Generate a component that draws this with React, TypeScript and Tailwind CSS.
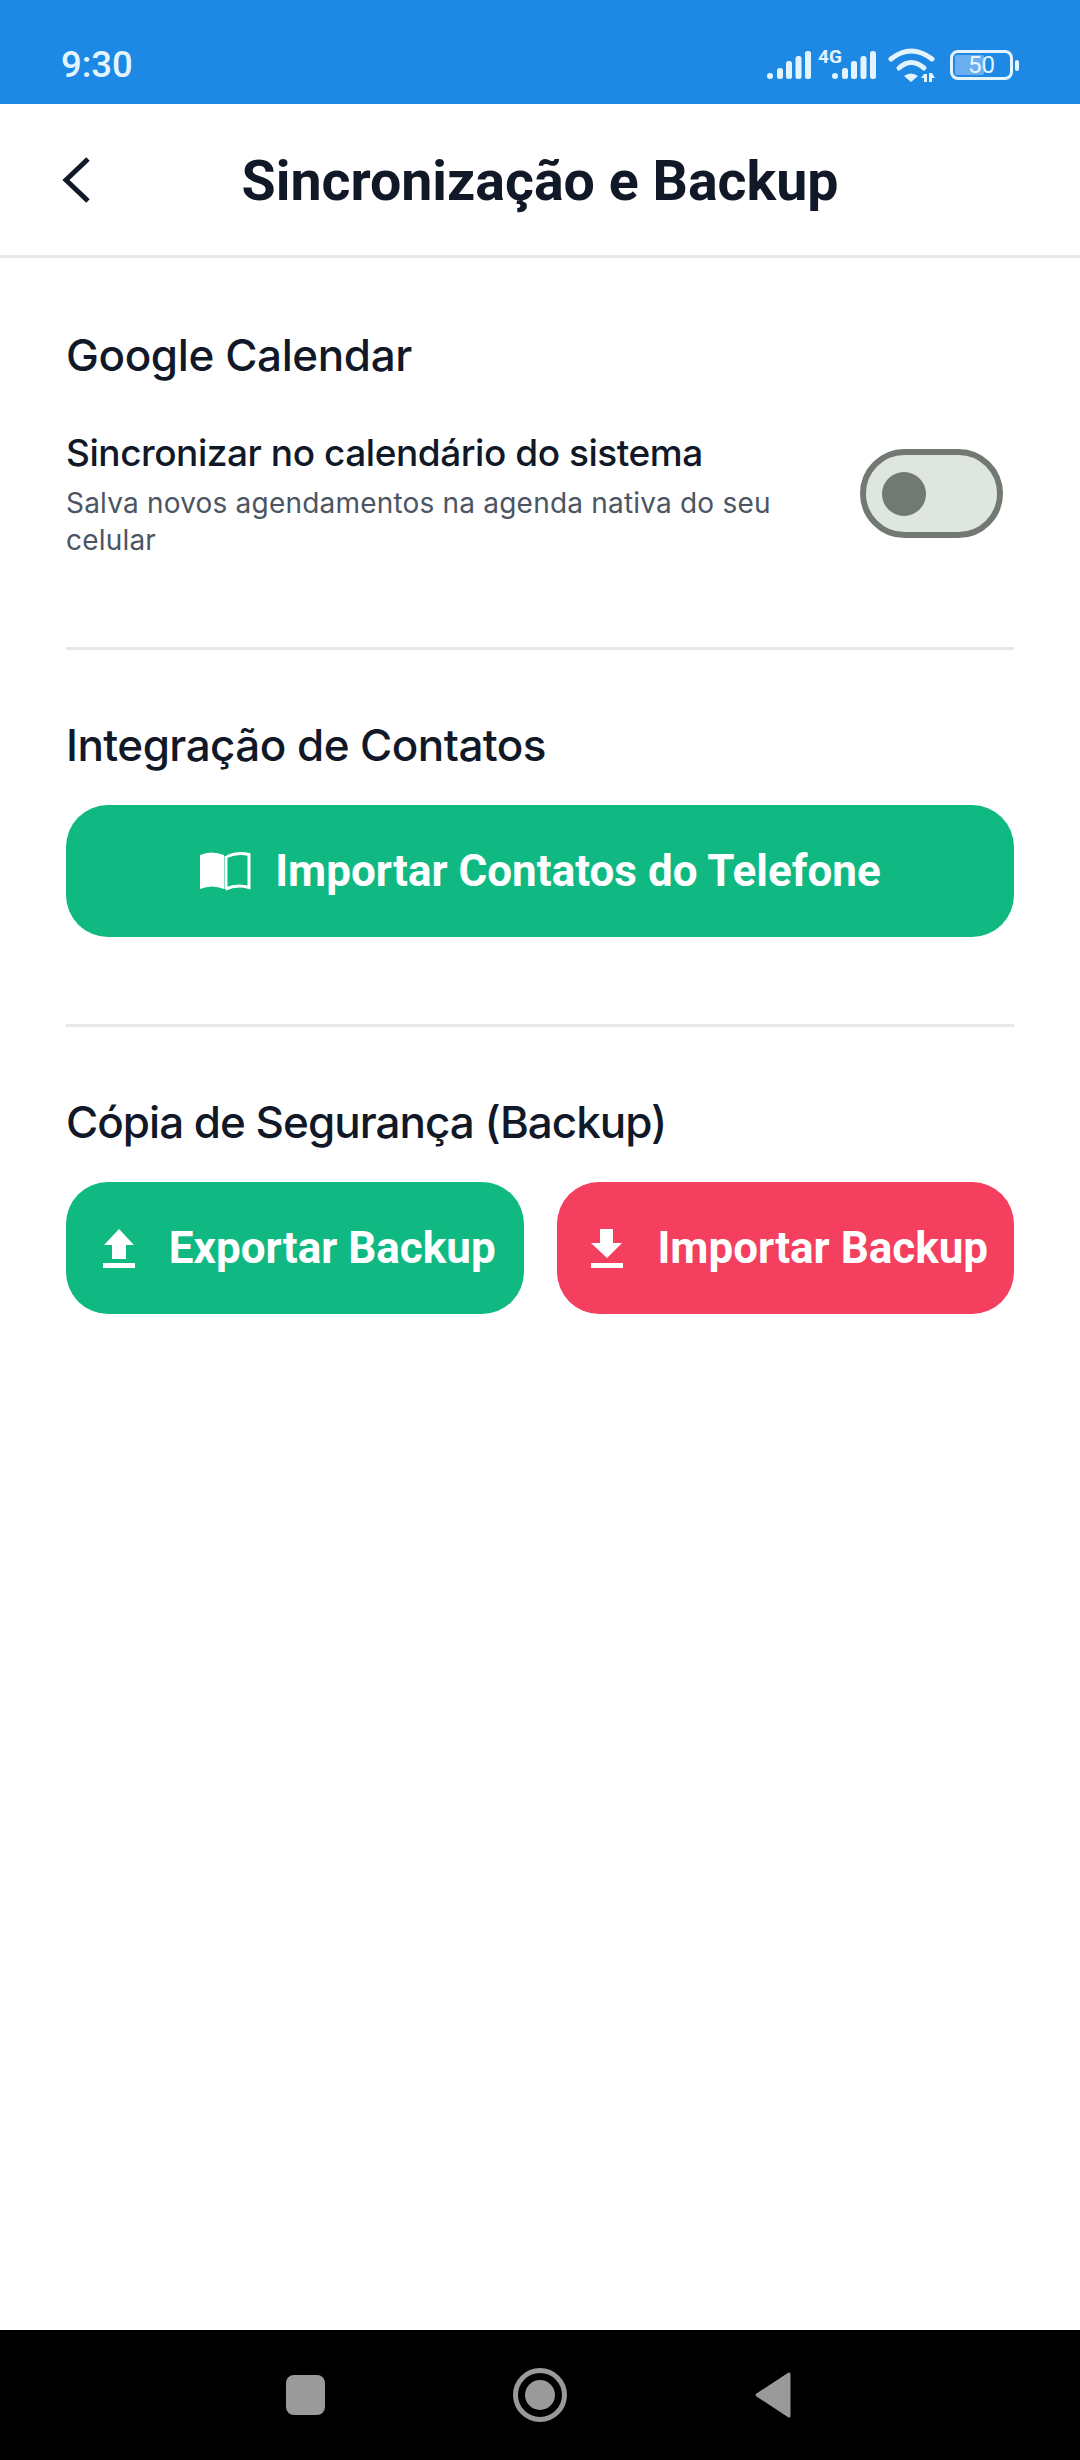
const heading = "font-['Inter',sans-serif] text-[44px] leading-[56px] font-medium text-[#111827]";
const btnText = "font-['Roboto',sans-serif] text-[44px] font-bold text-white whitespace-nowrap";

function Signal({ x }: { x: number }) {
  return (
    <g transform={`translate(${x} 0)`}>
      <rect x="0" y="26" width="6" height="6" rx="3" />
      <rect x="10" y="21" width="6" height="11" rx="2.5" />
      <rect x="19" y="14" width="6" height="18" rx="2.5" />
      <rect x="28.5" y="9" width="6" height="23" rx="2.5" />
      <rect x="38" y="4" width="6" height="28" rx="2.5" />
    </g>
  );
}

function StatusIcons() {
  return (
    <svg width="170" height="36" viewBox="0 0 170 36" fill="#e3f4ff">
      <Signal x={0} />
      <text x="51" y="16" fontSize="19" fontWeight="700" fontFamily="Roboto, sans-serif">4G</text>
      <Signal x={65} />
      <g fill="none" stroke="#e3f4ff" strokeWidth="5" strokeLinecap="round">
        <path d="M124 12 Q144 -4 165 12" />
        <path d="M132 21 Q144 10 157 21" />
      </g>
      <path d="M137 29 Q144 24 151 29 L144 35 Z" />
      <path d="M157 27 h3 v8 h-3 v-4 h-3 Z M162 26 h3 l3 5 h-3 v4 h-3 Z" />
    </svg>
  );
}

function Battery() {
  return (
    <div className="flex items-center gap-[2px]">
      <div className="relative flex h-[30px] w-[63px] items-center justify-center overflow-hidden rounded-[8px] border-[3px] border-[#e3f4ff]">
        <div className="absolute inset-y-[2px] left-[2px] w-[29px] rounded-[2px] bg-[#6aaef0]" />
        <span className="relative font-['Roboto',sans-serif] text-[24px] leading-none text-[#e3f4ff]">50</span>
      </div>
      <div className="h-[11px] w-[4px] rounded-[2px] bg-[#e3f4ff]" />
    </div>
  );
}

function BookIcon() {
  return (
    <svg width="52" height="40" viewBox="0 0 52 40">
      <path d="M1 4 Q12 -1 25 4 V38 Q13 33 1 38 Z" fill="white" />
      <path d="M28 5.5 Q38 1 50 3.5 V36.5 Q38 33 26.5 38" fill="none" stroke="white" strokeWidth="3" />
      <path d="M27 5 V38" stroke="white" strokeWidth="3" />
    </svg>
  );
}

function UpIcon() {
  return (
    <svg width="32" height="39" viewBox="0 0 32 39" fill="white">
      <path d="M16 0 L31 16 H23 V30 H9 V16 H1 Z" />
      <rect x="0" y="34" width="32" height="5" />
    </svg>
  );
}

function DownIcon() {
  return (
    <svg width="32" height="39" viewBox="0 0 32 39" fill="white">
      <path d="M9 0 H22 V14 H31 L16 29 L0 14 H9 Z" />
      <rect x="0" y="34" width="32" height="5" />
    </svg>
  );
}

export default function App() {
  return (
    <div className="flex h-[2460px] w-[1080px] flex-col bg-white">
      {/* status bar */}
      <div className="flex h-[104px] items-center justify-between bg-[#1e88e5] pl-[61px] pr-[61px] pt-[26px]">
        <span className="font-['Roboto',sans-serif] text-[36.5px] font-medium leading-[40px] text-[#e3f4ff]">9:30</span>
        <div className="flex items-center gap-[13px]">
          <StatusIcons />
          <Battery />
        </div>
      </div>

      {/* header */}
      <div className="relative flex h-[154px] items-center justify-center border-b-[3px] border-[#e5e7eb]">
        <svg className="absolute left-[56px] top-[50px]" width="40" height="52" viewBox="0 0 40 52" fill="none" stroke="#111827" strokeWidth="5">
          <path d="M32 5 L10 26 L32 47" />
        </svg>
        <span className="pt-[4px] font-['Roboto',sans-serif] text-[55.5px] font-bold leading-[60px] text-[#111827]">Sincronização e Backup</span>
      </div>

      {/* content */}
      <div className="flex flex-1 flex-col px-[66px]">
        <div className="border-b-[3px] border-[#e5e7eb] pb-[88px] pt-[69px]">
          <h2 className={`${heading} tracking-[-0.4px]`}>Google Calendar</h2>
          <div className="mt-[48px] flex items-start justify-between">
            <div className="w-[740px]">
              <p className="font-['Inter',sans-serif] text-[37px] font-medium leading-[44px] tracking-[-0.45px] text-[#111827]">Sincronizar no calendário do sistema</p>
              <p className="mt-[10px] font-['Inter',sans-serif] text-[28px] leading-[37px] tracking-[0.2px] text-[#4b5563]">Salva novos agendamentos na agenda nativa do seu celular</p>
            </div>
            <div className="mr-[11px] mt-[18px] flex h-[89px] w-[143px] items-center rounded-full border-[6px] border-[#727973] bg-[#dfe5df] pl-[16px]">
              <div className="h-[44px] w-[44px] rounded-full bg-[#727973]" />
            </div>
          </div>
        </div>

        <div className="border-b-[3px] border-[#e5e7eb] pb-[87px] pt-[67px]">
          <h2 className={`${heading} tracking-[-0.55px]`}>Integração de Contatos</h2>
          <button className="mt-[32px] flex h-[132px] w-full items-center justify-center gap-[24px] rounded-[42px] bg-[#10b981]">
            <BookIcon />
            <span className={btnText}>Importar Contatos do Telefone</span>
          </button>
        </div>

        <div className="pt-[67px]">
          <h2 className={`${heading} tracking-[-1px]`}>Cópia de Segurança (Backup)</h2>
          <div className="mt-[32px] flex gap-[33px]">
            <button className="flex h-[132px] flex-1 items-center justify-center gap-[34px] rounded-[42px] bg-[#10b981] pl-[9px]">
              <UpIcon />
              <span className={btnText}>Exportar Backup</span>
            </button>
            <button className="flex h-[132px] flex-1 items-center justify-center gap-[34px] rounded-[42px] bg-[#f43f5e] pl-[9px]">
              <DownIcon />
              <span className={btnText}>Importar Backup</span>
            </button>
          </div>
        </div>
      </div>

      {/* nav bar */}
      <div className="flex h-[130px] items-center justify-center bg-black pr-[3px]">
        <div className="flex w-[505px] items-center justify-between">
          <div className="h-[40px] w-[39px] rounded-[8px] bg-[#9a9a9a]" />
          <div className="flex h-[54px] w-[54px] items-center justify-center rounded-full border-[5px] border-[#9a9a9a]">
            <div className="h-[30px] w-[30px] rounded-full bg-[#9a9a9a]" />
          </div>
          <svg width="36" height="46" viewBox="0 0 36 46" fill="#9a9a9a" stroke="#9a9a9a" strokeWidth="3" strokeLinejoin="round">
            <path d="M34 2 V44 L2 23 Z" />
          </svg>
        </div>
      </div>
    </div>
  );
}
